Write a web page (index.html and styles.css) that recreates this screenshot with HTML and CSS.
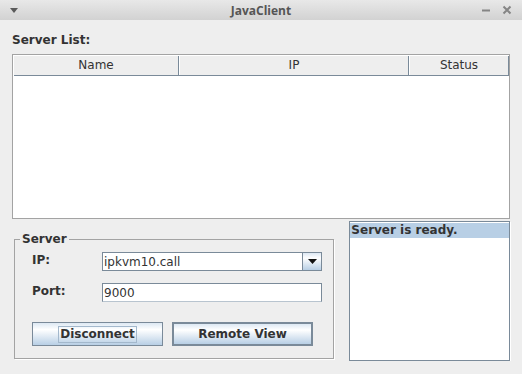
FILE: index.html
```html
<!DOCTYPE html>
<html lang="en">
<head>
    <meta charset="UTF-8">
    <title>JavaClient</title>
    <link rel="stylesheet" href="styles.css">
</head>
<body>
    <div class="titlebar">
        <svg class="menu-icon" width="8" height="6" viewBox="0 0 8 6"><path d="M0 0 H8 L4 5 Z" fill="#5a5a5a"/></svg>
        <span class="title">JavaClient</span>
        <div class="win-buttons">
            <svg width="10" height="10" viewBox="0 0 10 10"><path d="M1 5.5 H9" stroke="#858585" stroke-width="2"/></svg>
            <svg width="10" height="10" viewBox="0 0 10 10"><path d="M1.5 1.5 L8.5 8.5 M8.5 1.5 L1.5 8.5" stroke="#858585" stroke-width="2"/></svg>
        </div>
    </div>
    <div class="content">
        <div class="list-label">Server List:</div>
        <div class="table-pane">
            <div class="table-header">
                <div class="col">Name</div>
                <div class="col">IP</div>
                <div class="col">Status</div>
            </div>
        </div>
        <div class="bottom">
            <div class="group">
                <span class="legend">Server</span>
                <div class="field-row">
                    <label class="field-label">IP:</label>
                    <div class="combo">
                        <span class="combo-text">ipkvm10.call</span>
                        <span class="combo-arrow">
                            <svg width="9" height="5" viewBox="0 0 9 5"><path d="M0 0 H9 L4.5 5 Z" fill="#111"/></svg>
                        </span>
                    </div>
                </div>
                <div class="field-row">
                    <label class="field-label">Port:</label>
                    <div class="text-field">9000</div>
                </div>
                <div class="button-row">
                    <button type="button" class="btn btn-disconnect"><span class="focus">Disconnect</span></button>
                    <button type="button" class="btn btn-default">Remote View</button>
                </div>
            </div>
            <div class="status-list">
                <div class="status-item">Server is ready.</div>
            </div>
        </div>
    </div>
</body>
</html>
```

FILE: styles.css
```css
body {
    margin: 0;
    background-color: #eeeeee;
    font-family: "DejaVu Sans", sans-serif;
    font-size: 12px;
    color: #333333;
}
.titlebar {
    height: 20px;
    display: flex;
    align-items: center;
    justify-content: space-between;
    background: linear-gradient(#e8e8e8, #d2d2d2);
    position: relative;
}
.menu-icon {
    margin-left: 10px;
    margin-top: 1px;
}
.title {
    position: absolute;
    left: 0;
    right: 0;
    text-align: center;
    font-family: "Open Sans", sans-serif;
    font-weight: bold;
    font-size: 12px;
    color: #555555;
}
.win-buttons {
    display: flex;
    gap: 11px;
    margin-right: 10px;
}
.content {
    padding: 13px 12px 0 12px;
}
.list-label {
    font-weight: bold;
    line-height: 15px;
    margin-bottom: 6px;
}
.table-pane {
    width: 498px;
    height: 165px;
    box-sizing: border-box;
    border: 1px solid #a3a3a3;
    padding: 1px 0 0 1px;
    background-color: #ffffff;
}
.table-header {
    display: grid;
    grid-template-columns: 165px 230px 1fr;
    height: 19px;
    background-color: #eeeeee;
    border-bottom: 1px solid #7a8a99;
}
.col {
    text-align: center;
    line-height: 18px;
    border-right: 1px solid #7a8a99;
    border-left: 1px solid #ffffff;
}
.col:first-child {
    border-left: none;
}
.bottom {
    display: flex;
    align-items: flex-start;
}
.group {
    position: relative;
    width: 321px;
    height: 120px;
    box-sizing: border-box;
    margin: 20px 0 0 2px;
    border: 1px solid #a3a3a3;
    box-shadow: 1px 1px 0 #ffffff;
    padding: 12px 0 0 17px;
}
.legend {
    position: absolute;
    top: -8px;
    left: 5px;
    padding: 0 2px;
    background-color: #eeeeee;
    font-weight: bold;
    line-height: 15px;
}
.field-row {
    display: flex;
    align-items: flex-start;
    margin-bottom: 12px;
}
.field-label {
    width: 70px;
    font-weight: bold;
    line-height: 16px;
}
.combo {
    display: flex;
    width: 220px;
    height: 19px;
    box-sizing: border-box;
    border: 1px solid #7a8a99;
    background-color: #ffffff;
}
.combo-text {
    flex: 1;
    padding-left: 1px;
    line-height: 18px;
}
.combo-arrow {
    width: 18px;
    display: flex;
    align-items: center;
    justify-content: center;
    border-left: 1px solid #7a8a99;
    background: linear-gradient(#dde8f3, #ffffff 30%, #b8cfe5);
}
.text-field {
    width: 220px;
    height: 19px;
    box-sizing: border-box;
    border: 1px solid #7a8a99;
    border-bottom-color: #b8c4cf;
    background-color: #ffffff;
    padding-left: 1px;
    line-height: 18px;
}
.button-row {
    display: flex;
    gap: 9px;
    margin-top: 20px;
}
.btn {
    height: 24px;
    box-sizing: border-box;
    border: 1px solid #7a8a99;
    background: linear-gradient(#dde8f3, #ffffff 30%, #b8cfe5);
    font-family: "DejaVu Sans", sans-serif;
    font-size: 12px;
    font-weight: bold;
    color: #333333;
    padding: 0;
}
.btn-disconnect {
    width: 131px;
}
.btn-disconnect .focus {
    display: inline-block;
    padding: 0 1px;
    line-height: 15px;
    border: 1px solid #a3b8cc;
}
.btn-default {
    width: 141px;
    border: 2px solid #7a8a99;
}
.status-list {
    width: 161px;
    height: 140px;
    box-sizing: border-box;
    margin: 2px 0 0 15px;
    border: 1px solid #7a8a99;
    box-shadow: 1px 1px 0 #ffffff;
    background-color: #ffffff;
    padding: 1px 0 0 0;
}
.status-item {
    background-color: #b8cfe5;
    font-weight: bold;
    line-height: 15px;
    padding-left: 1px;
}
```
